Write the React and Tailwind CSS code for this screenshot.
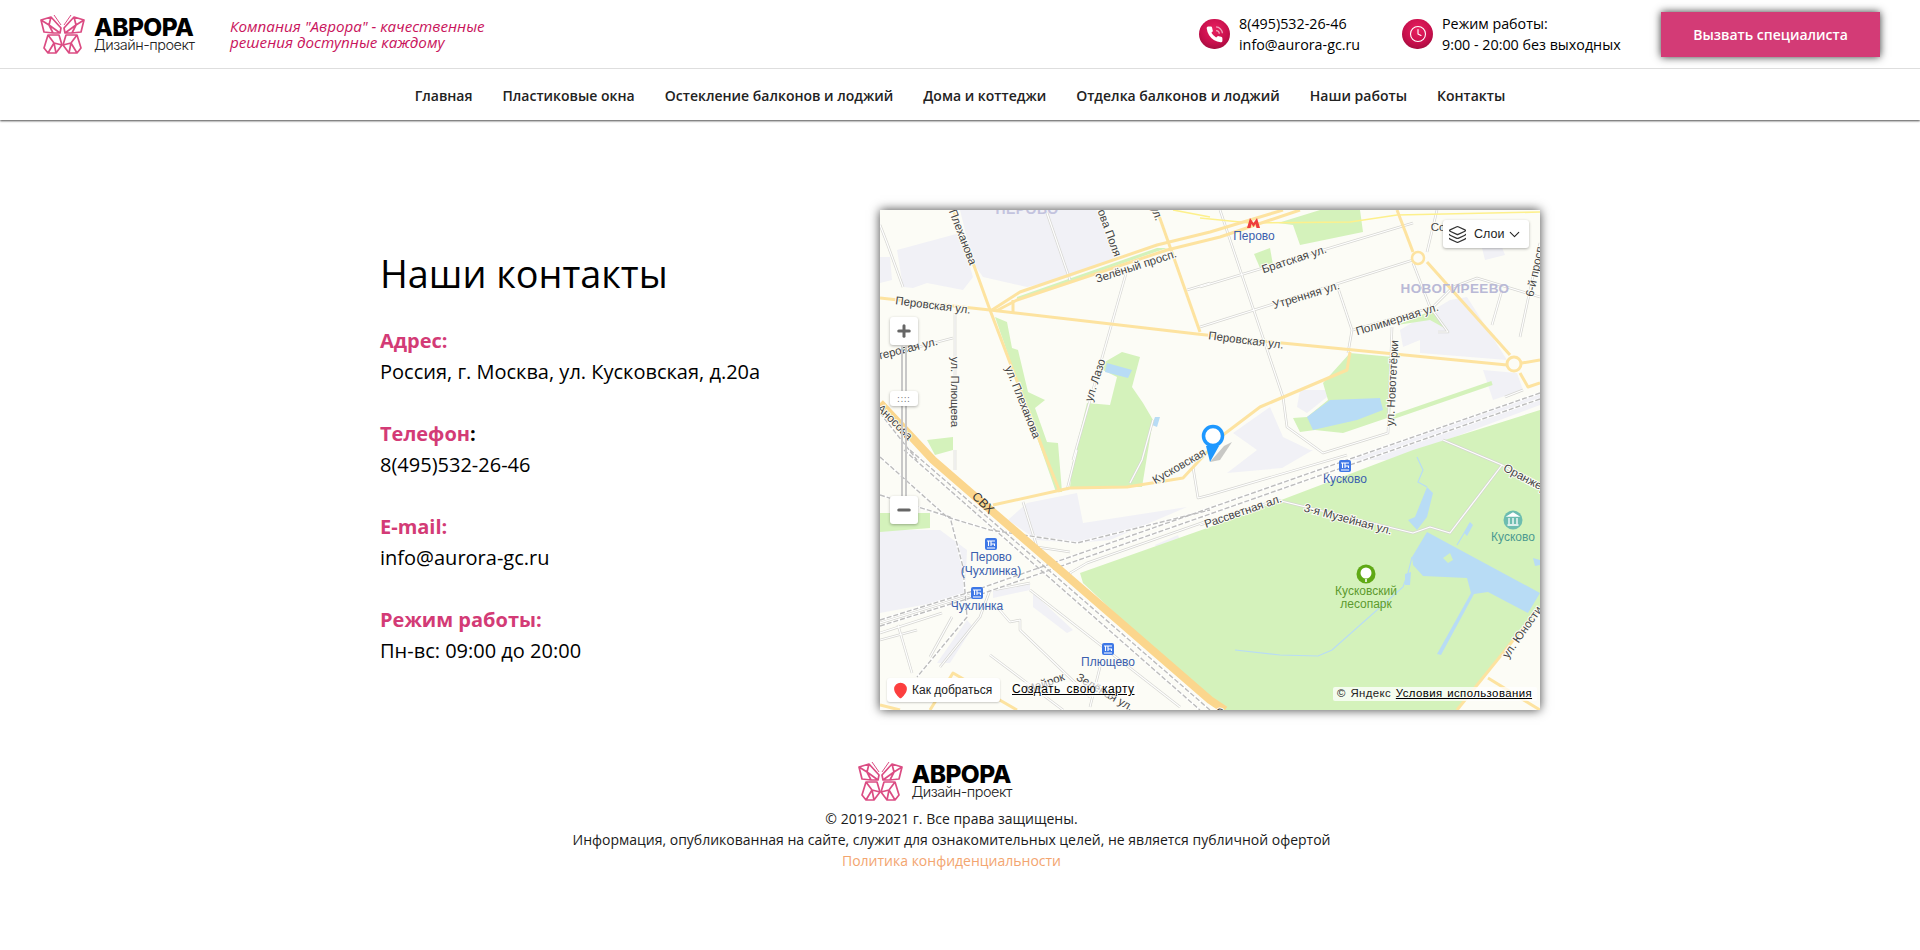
import { Clock, ChevronDown, Layers, Plus, Minus, MapPin } from 'lucide-react';

const NAV = ['Главная', 'Пластиковые окна', 'Остекление балконов и лоджий', 'Дома и коттеджи', 'Отделка балконов и лоджий', 'Наши работы', 'Контакты'];

const CONTACTS = [
  { label: 'Адрес', value: 'Россия, г. Москва, ул. Кусковская, д.20а' },
  { label: 'Телефон', value: '8(495)532-26-46', darkColon: true },
  { label: 'E-mail', value: 'info@aurora-gc.ru' },
  { label: 'Режим работы', value: 'Пн-вс: 09:00 до 20:00' },
];

// map shapes, in map pixels (660x500)
const LAVENDER = [
  '80,0 217,0 237,47 190,67 147,77 103,67 93,53',
  '17,40 80,23 93,67 83,80 47,73 33,78 23,77',
  '0,47 10,47 12,70 0,73',
  '520,120 570,90 587,87 627,150 540,143 540,130 523,137',
  '603,160 637,163 643,180 613,190',
  '353,223 390,197 403,227 430,240 433,240 402,258 347,263 377,240',
  '417,197 420,180 448,180 447,187 427,203',
  '0,320 60,320 87,340 85,387 0,403',
  '147,293 197,283 203,313 307,297 230,330 197,333 157,330 128,310',
  '153,383 193,420 187,423 153,397',
  '113,380 150,373 150,380 113,388',
  '57,453 87,410 93,417 70,453',
  '275,335 298,325 302,335 280,345',
  '600,30 618,27 625,45 605,50',
  '467,250 660,183 660,195 513,250',
];

const GREEN = [
  '200,363 330,317 533,240 660,200 660,397 577,500 340,500 320,483 203,373',
  '223,153 242,142 260,147 252,177 263,193 273,210 262,277 190,277 193,250 207,193 230,195 237,167 223,160',
  '115,107 127,112 132,138 138,140 148,182 165,190 155,198 167,232 178,233 182,282 176,282',
  '413,208 427,207 448,190 443,173 470,143 513,147 510,207 463,223 435,220 420,222',
  '517,115 553,100 568,120 550,110',
  '137,87 277,38 287,38 137,90',
  '0,303 50,303 50,318 0,322',
  '47,230 73,227 73,240 55,245',
  '398,13 440,0 480,0 483,22 420,35 413,15',
  '374,44 390,38 393,55 380,58',
];

const WATER = [
  '547,322 660,383 648,403 608,382 594,384 561,445 557,444 591,383 587,368 543,366 533,355 532,347',
  '547,277 553,283 547,307 537,320 528,310 535,307',
  '427,207 450,190 500,188 503,200 477,210 433,220',
  '653,348 660,350 660,355 655,356',
  '525,364 531,362 530,375 525,375',
  '227,153 252,160 248,168 225,162',
  '275,207 280,207 277,217 272,215',
  '584,323 590,312 593,315 587,326',
];

const STREAMS = [
  'M537,247 L543,260 L538,272 L547,277',
  'M590,313 L583,325 L577,335',
  'M532,347 L528,363 L523,377 L452,440 L438,446 L400,445 L355,440',
];

const MINOR_ROADS = [
  'M7,33 L23,77', 'M0,15 L7,33', 'M167,3 L190,70', 'M247,60 L193,250', 'M75,103 L75,210', 'M0,147 L73,128',
  'M307,80 L330,73', 'M273,210 L262,250 L250,273', 'M320,77 L533,13', 'M320,117 L533,50',
  'M340,0 L403,187 L407,217 L443,243 L508,223 L512,117', 'M457,75 L472,120 L468,143',
  'M473,120 L553,97 L573,77 L597,68 L660,87', 'M533,53 L550,97 L568,122 L558,122', 'M557,0 L547,42',
  'M622,80 L612,115', 'M660,33 L640,127', 'M625,187 L643,180', 'M563,230 L622,255 L660,278',
  'M622,255 L570,323 L550,317 L533,323 L397,290', 'M320,315 L397,290', 'M190,373 L190,363 L207,353 L330,310',
  'M143,292 L157,337 L190,342', 'M313,257 L318,288 L330,285', 'M187,280 L197,240', 'M75,240 L75,260',
  'M117,397 L130,412 L140,410 L140,420 L210,487', 'M150,380 L300,497', 'M0,423 L62,403', 'M0,430 L37,420',
  'M18,415 L32,463', 'M72,407 L50,447', 'M110,380 L100,407 L60,457', 'M110,445 L183,500', 'M220,457 L210,497',
  'M330,285 L467,245', 'M113,380 L150,373', 'M0,413 L90,385',
];

const MAIN_ROADS = [
  'M0,88 L110,100 L317,124 L402,133 L627,155',
  'M112,100 L140,82 L277,35 L330,22 L403,0',
  'M116,101 L137,90 L287,40 L340,27 L420,0',
  'M277,0 L320,122',
  'M133,90 L133,102',
  'M73,0 L93,53 L110,100 L167,250 L180,282',
  'M517,0 L533,42',
  'M547,52 L630,145',
  'M640,163 L648,177 L660,173',
  'M642,153 L660,150',
  'M470,142 L467,160 L380,197 L343,225 L303,268 L247,277 L190,278 L113,295',
  'M50,500 L73,463 L137,500',
  'M0,495 L20,500',
  'M660,397 L577,500',
  'M608,468 L660,500',
];

const RAILS = [
  'M0,410 L90,382 L330,298 L467,250 L660,183',
  'M0,416 L90,388 L330,304 L467,256 L660,189',
  'M30,240 L330,500',
  'M0,203 L37,250',
  'M24,240 L320,500',
  'M0,285 L70,307 L83,357 L87,407 L37,467',
  'M0,247 L67,307 L110,320 L197,333 L330,300',
];

const LABELS = [
  ['Плеханова', 83, 27, 69], ['Зелёный просп.', 256, 56, -18], ['Перовская ул.', 53, 95, 7], ['Перовская ул.', 366, 130, 7],
  ['ул. Плющева', 75, 182, 90], ['ул. Плеханова', 143, 192, 68], ['ул. Лазо', 215, 170, -72], ['Перова Поля', 226, 13, 70],
  ['Аносова', 15, 212, 45], ['Братская ул.', 414, 49, -18], ['Утренняя ул.', 426, 85, -17], ['Полимерная ул.', 517, 109, -17],
  ['ул. Новотетёрки', 512, 173, -87], ['6-й просп.', 655, 60, -78], ['Со', 558, 17, 0], ['Кусковская', 299, 256, -30],
  ['Рассветная ал.', 363, 301, -19], ['3-я Музейная ул.', 468, 309, 15], ['Оранжерейная ул.', 668, 280, 28], ['ул. Юности', 642, 422, -55],
  ['Союзный', 358, 512, 28], ['Мастеровая ул.', 17, 141, -14], ['ул.', 277, 3, 70], ['Майрок', 165, 473, -20], ['Зелёная ул.', 225, 482, 30],
];

const STATIONS = [
  { x: 465, y: 256, lines: ['Кусково'] },
  { x: 111, y: 334, lines: ['Перово', '(Чухлинка)'] },
  { x: 97, y: 383, lines: ['Чухлинка'] },
  { x: 228, y: 439, lines: ['Плющево'] },
];

function Butterfly({ className }) {
  const wing = (
    <g>
      <path d="M1 5 L11 2 L21 13 L20 18 L13 18 L4 17 Z M11 2 L9 10 L20 18 M1 5 L9 10 L13 18" />
      <path d="M8 20 L19 20 L22 30 L16 38 L8 38 L4 33 Z M8 20 L14 28 L8 38 M14 28 L22 30 M14 28 L16 38" />
      <path d="M14 0 L21 10" strokeWidth="1" />
    </g>
  );
  return (
    <svg viewBox="0 0 45 39" className={className} fill="none" stroke="#db4c83" strokeWidth="1.7" strokeLinejoin="round">
      {wing}
      <g transform="translate(45 0) scale(-1 1)">{wing}</g>
    </svg>
  );
}

function Logo() {
  return (
    <div className="flex items-center gap-[9px]">
      <Butterfly className="w-[45px] h-[39px]" />
      <div className="w-[101px]">
        <div className="font-['Inter',sans-serif] font-extrabold text-[24.5px] leading-[21px] text-black tracking-[-0.6px]">АВРОРА</div>
        <div className="font-['Inter',sans-serif] font-light text-[14.5px] leading-[14px] text-[#222] tracking-[-0.5px]">Дизайн-проект</div>
      </div>
    </div>
  );
}

function Ball({ children }) {
  return (
    <div className="w-[31px] h-[30px] rounded-full flex items-center justify-center text-white bg-[radial-gradient(circle_at_50%_35%,#e8205f_0%,#c70f4c_55%,#8a0a33_100%)]">
      {children}
    </div>
  );
}

function PhoneIcon() {
  return (
    <svg viewBox="0 0 24 24" className="w-[19px] h-[19px]">
      <path fill="#fff" d="M22 16.92v3a2 2 0 0 1-2.18 2 19.79 19.79 0 0 1-8.63-3.07 19.5 19.5 0 0 1-6-6 19.79 19.79 0 0 1-3.07-8.67A2 2 0 0 1 4.11 2h3a2 2 0 0 1 2 1.72 12.84 12.84 0 0 0 .7 2.81 2 2 0 0 1-.45 2.11L8.09 9.91a16 16 0 0 0 6 6l1.27-1.27a2 2 0 0 1 2.11-.45 12.84 12.84 0 0 0 2.81.7A2 2 0 0 1 22 16.92z" />
      <path fill="none" stroke="#fff" strokeOpacity="0.6" strokeWidth="1.6" d="M14 7a4 4 0 0 1 4 4 M14 2.5a8.5 8.5 0 0 1 8 8" />
    </svg>
  );
}

function StationIcon({ x, y }) {
  return (
    <g transform={`translate(${x - 6} ${y - 6})`}>
      <rect width="12" height="12" rx="2" fill="#3d77e6" />
      <path d="M2 3 H10 M3.5 3 V8 M6 3 V8 M6 6 H9.5 V8 M2 10 H10" stroke="#fff" strokeWidth="1.1" fill="none" />
    </g>
  );
}

function MapDrawing() {
  return (
    <svg viewBox="0 0 660 500" className="block w-full h-full bg-[#fcfcf6] font-['Liberation_Sans',sans-serif]">
      {LAVENDER.map((p) => <polygon key={p} points={p} fill="#f1f1f6" />)}
      {GREEN.map((p) => <polygon key={p} points={p} fill="#d4f2bb" />)}
      <polygon points="624,457 655,448 660,453 660,500 583,500" fill="#fcfcf6" />
      {WATER.map((p) => <polygon key={p} points={p} fill="#b8dcf5" />)}
      <polygon points="563,348 570,343 573,350 568,353" fill="#d4f2bb" />
      {STREAMS.map((d) => <path key={d} d={d} fill="none" stroke="#b8dcf5" strokeWidth="1.2" />)}
      <path d="M513,207 L612,173" stroke="#d4f2bb" strokeWidth="4" />

      <g fill="none" strokeLinejoin="round">
        {MINOR_ROADS.map((d) => <path key={d} d={d} stroke="#d6d6d2" strokeWidth="2.6" />)}
        {MINOR_ROADS.map((d) => <path key={d} d={d} stroke="#fff" strokeWidth="1.2" />)}
        {RAILS.map((d) => <path key={d} d={d} stroke="#fff" strokeWidth="2.4" />)}
        {RAILS.map((d) => <path key={d} d={d} stroke="#bdbdbd" strokeWidth="1.4" strokeDasharray="5 2" />)}
        <path d="M293,0 L330,7 M320,8 L370,13 L470,12 L517,5 L660,2" stroke="#fdf08c" strokeWidth="1.6" />
        {MAIN_ROADS.map((d) => <path key={d} d={d} stroke="#fde3a0" strokeWidth="3" />)}
        <circle cx="538" cy="48" r="6" stroke="#fde3a0" strokeWidth="2.5" />
        <circle cx="634" cy="154" r="7" stroke="#fde3a0" strokeWidth="3" />
        <path d="M0,193 L53,250 L330,490 L345,500" stroke="#fbd68d" strokeWidth="8" />
      </g>

      <g fontSize="11.5" fill="#444" textAnchor="middle" stroke="#fcfcf6" strokeWidth="2" className="[paint-order:stroke]">
        {LABELS.map(([t, x, y, r]) => (
          <text key={t + x} transform={`translate(${x} ${y}) rotate(${r})`} dy="4">{t}</text>
        ))}
      </g>
      <text x="147" y="4" textAnchor="middle" fontSize="14" fontWeight="700" fill="#c3c3de" letterSpacing="0.5">ПЕРОВО</text>
      <text x="575" y="83" textAnchor="middle" fontSize="13.5" fontWeight="700" fill="#b9b9d6" letterSpacing="0.4">НОВОГИРЕЕВО</text>
      <text x="103" y="297" textAnchor="middle" fontSize="12.5" fill="#333" transform="rotate(45 103 293)">СВХ</text>

      <path d="M367,18 L370,8 L373.5,13 L377,8 L380,18 H376.5 L375.5,14 L373.5,17 L371.5,14 L370.5,18 Z" fill="#ee3d3d" />
      <text x="374" y="30" textAnchor="middle" fontSize="12" fill="#3b5fae">Перово</text>

      {STATIONS.map((s) => (
        <g key={s.x}>
          <StationIcon x={s.x} y={s.y} />
          {s.lines.map((l, i) => (
            <text key={l} x={s.x} y={s.y + 17 + i * 14} textAnchor="middle" fontSize="12" fill="#3b5fae">{l}</text>
          ))}
        </g>
      ))}

      <circle cx="633" cy="310" r="9.5" fill="#6dbdb0" />
      <path d="M628,306 H638 L633,303 Z M629,308 V314 M633,308 V314 M637,308 V314 M627.5,315 H638.5" stroke="#fff" strokeWidth="1.3" fill="#fff" />
      <text x="633" y="331" textAnchor="middle" fontSize="12" fill="#4c9a90">Кусково</text>

      <circle cx="486" cy="364" r="9.5" fill="#5fa915" />
      <path d="M486,369 V372" stroke="#fff" strokeWidth="1.6" />
      <circle cx="486" cy="363" r="5.5" fill="#fff" />
      <text x="486" y="385" textAnchor="middle" fontSize="12" fill="#5c9a2e">Кусковский</text>
      <text x="486" y="398" textAnchor="middle" fontSize="12" fill="#5c9a2e">лесопарк</text>

      {/* placemark */}
      <polygon points="330,252 344,236 352,232 340,250" fill="#9c9c9c" opacity="0.55" />
      <path d="M326,236 L330,252 L339,236 Z" fill="#1e98ff" />
      <circle cx="333" cy="226" r="9.5" fill="#fff" stroke="#1e98ff" strokeWidth="3.5" />
    </svg>
  );
}

function MapBlock() {
  return (
    <div className="relative w-[660px] h-[500px] overflow-visible shadow-[0_0_10px_rgba(0,0,0,0.75)]">
      <div className="w-full h-full overflow-hidden">
        <MapDrawing />
      </div>

      <div className="absolute left-[563px] top-[10px] w-[86px] h-[28px] bg-white rounded-[3px] shadow-[0_1px_3px_rgba(0,0,0,0.3)] flex items-center pl-[5px] text-[12.5px] text-[#222] font-['Liberation_Sans',sans-serif]">
        <Layers size={19} strokeWidth={1.6} className="text-[#333]" />
        <span className="ml-[7px]">Слои</span>
        <ChevronDown size={17} strokeWidth={1.5} className="ml-[2px]" />
      </div>

      <div className="absolute left-[10px] top-[107px] w-[28px] h-[28px] bg-white rounded-[3px] shadow-[0_1px_3px_rgba(0,0,0,0.3)] flex items-center justify-center">
        <Plus size={18} strokeWidth={4} className="text-[#666]" />
      </div>
      <div className="absolute left-[21px] top-[135px] w-[6px] h-[151px] border-x-2 border-[#c8c8c8]" />
      <div className="absolute left-[10px] top-[181px] w-[28px] h-[15px] bg-white rounded-[3px] shadow-[0_1px_3px_rgba(0,0,0,0.3)] flex items-center justify-center text-[9px] leading-none text-[#666] tracking-[1px]">
        ::::
      </div>
      <div className="absolute left-[10px] top-[286px] w-[28px] h-[28px] bg-white rounded-[3px] shadow-[0_1px_3px_rgba(0,0,0,0.3)] flex items-center justify-center">
        <Minus size={18} strokeWidth={4} className="text-[#666]" />
      </div>

      <div className="absolute left-[7px] top-[468px] w-[113px] h-[24px] bg-white rounded-[3px] shadow-[0_1px_2px_rgba(0,0,0,0.2)] flex items-center pl-[5px] gap-[3px] text-[12px] text-[#222] font-['Liberation_Sans',sans-serif] whitespace-nowrap">
        <MapPin size={17} fill="#fc3f3f" stroke="#fc3f3f" className="shrink-0" />
        <span>Как добраться</span>
      </div>
      <div className="absolute left-[130px] top-[472px] px-[2px] bg-[rgba(255,255,255,0.6)] text-[12px] leading-[15px] tracking-[0.45px] [word-spacing:2px] text-black underline font-['Liberation_Sans',sans-serif]">
        Создать свою карту
      </div>
      <div className="absolute left-[453px] top-[477px] w-[204px] h-[14px] rounded-[2px] bg-[rgba(255,255,255,0.75)] flex items-center pl-[4px] text-[11.4px] tracking-[0.42px] [word-spacing:1px] text-[#222] font-['Liberation_Sans',sans-serif] whitespace-nowrap">
        © Яндекс&nbsp;<span className="underline text-black">Условия использования</span>
      </div>
    </div>
  );
}

export default function App() {
  return (
    <div className="min-h-[950px] bg-white font-['Open_Sans',sans-serif] text-black">
      <header className="shadow-[0_1px_2px_rgba(0,0,0,0.7)] relative">
        <div className="h-[69px] border-b border-[#dedede] flex items-center pl-[40px] pr-[40px]">
          <Logo />
          <p className="ml-[35px] text-[15.2px] leading-[16px] italic text-[#c9145c]">
            Компания "Аврора" - качественные<br />решения доступные каждому
          </p>
          <div className="ml-auto flex items-center gap-[9px]">
            <Ball><PhoneIcon /></Ball>
            <div className="text-[14.3px] leading-[21px] font-medium w-[154px] whitespace-nowrap">
              8(495)532-26-46<br />info@aurora-gc.ru
            </div>
            <Ball><Clock size={18} strokeWidth={1.5} /></Ball>
            <div className="text-[14.3px] leading-[21px] font-medium w-[210px] whitespace-nowrap">
              Режим работы:<br />9:00 - 20:00 без выходных
            </div>
            <button className="w-[219px] h-[45px] bg-[#d33b76] text-white text-[14px] font-semibold shadow-[0_0_8px_rgba(0,0,0,0.8)]">
              Вызвать специалиста
            </button>
          </div>
        </div>
        <nav className="h-[51px] pt-[2px] flex items-center justify-center gap-[30px] text-[14px] font-semibold text-[#222]">
          {NAV.map((n) => <a key={n}>{n}</a>)}
        </nav>
      </header>

      <main className="w-[1160px] mx-auto pt-[90px] flex justify-between">
        <div className="pt-[36px]">
          <h1 className="text-[37.8px] leading-[56px] font-medium mb-[23px]">Наши контакты</h1>
          {CONTACTS.map((c) => (
            <div key={c.label} className="text-[20px] leading-[31px] mb-[31px] last:mb-0">
              <div className="font-bold text-[#d33b76]">
                {c.label}<span className={c.darkColon ? 'text-black' : ''}>:</span>
              </div>
              <div>{c.value}</div>
            </div>
          ))}
        </div>
        <MapBlock />
      </main>

      <footer className="pt-[52px] pr-[17px] flex flex-col items-center text-[14px] leading-[21px] text-[#1a1a1a]">
        <div className="mr-[33px]"><Logo /></div>
        <p className="mt-[7px]">© 2019-2021 г. Все права защищены.</p>
        <p>Информация, опубликованная на сайте, служит для ознакомительных целей, не является публичной офертой</p>
        <a className="text-[#f3a56f]">Политика конфиденциальности</a>
      </footer>
    </div>
  );
}
